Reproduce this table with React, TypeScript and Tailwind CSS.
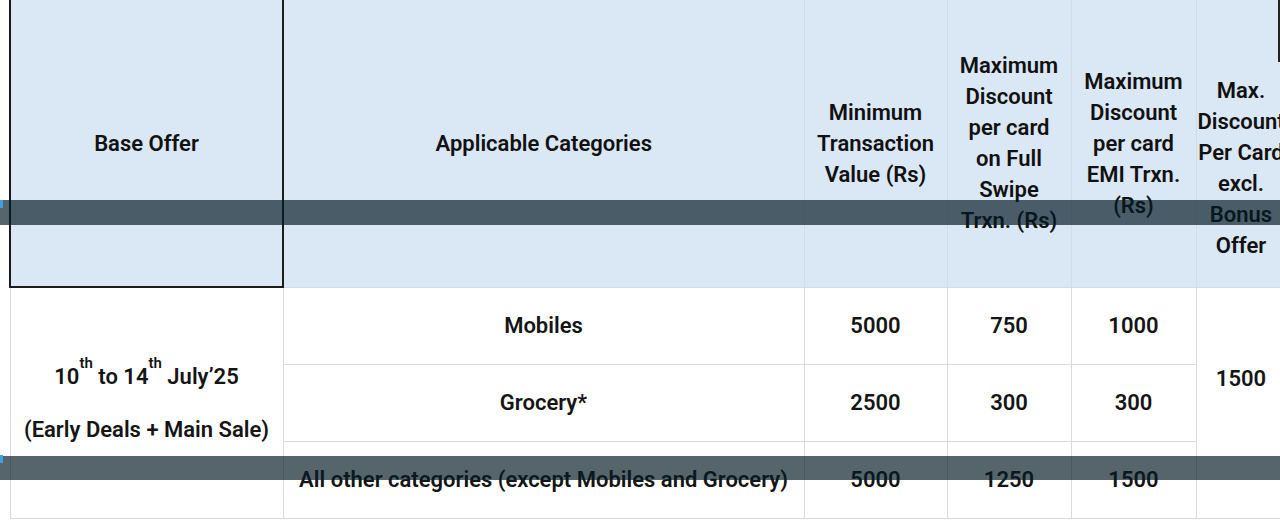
import React from "react";

const headCell =
  "bg-[#dae7f5] border border-[#d3dbe4] text-center align-middle text-[22px] leading-[31px] text-[#111]";
const bodyCell =
  "border border-[#dadada] text-center align-middle text-[22px] leading-[31px] text-[#151515] h-[77px]";

const rows = [
  { cat: "Mobiles", min: "5000", swipe: "750", emi: "1000" },
  { cat: "Grocery*", min: "2500", swipe: "300", emi: "300" },
  {
    cat: "All other categories (except Mobiles and Grocery)",
    min: "5000",
    swipe: "1250",
    emi: "1500",
  },
];

function Lines({ lines }: { lines: string[] }) {
  return (
    <>
      {lines.map((l, i) => (
        <div key={i} className="whitespace-nowrap">
          {l}
        </div>
      ))}
    </>
  );
}

export default function App() {
  return (
    <div
      className="relative w-[1280px] h-[531px] overflow-hidden bg-white"
      style={{ fontFamily: "Roboto, 'Noto Sans', sans-serif" }}
    >
      <table className="table-fixed border-collapse ml-[9px] mt-[-2px] w-[1276px] font-semibold">
        <colgroup>
          <col className="w-[273px]" />
          <col className="w-[521px]" />
          <col className="w-[143px]" />
          <col className="w-[124px]" />
          <col className="w-[125px]" />
          <col className="w-[90px]" />
        </colgroup>
        <thead>
          <tr>
            <th className="bg-[#dae7f5] border-2 border-[#1c1c1c] h-[288px] text-center align-middle text-[22px] leading-[31px] text-[#111] font-semibold">
              Base Offer
            </th>
            <th className={`${headCell} font-semibold`}>Applicable Categories</th>
            <th className={`${headCell} font-semibold`}>
              <Lines lines={["Minimum", "Transaction", "Value (Rs)"]} />
            </th>
            <th className={`${headCell} font-semibold`}>
              <Lines
                lines={["Maximum", "Discount", "per card", "on Full", "Swipe", "Trxn. (Rs)"]}
              />
            </th>
            <th className={`${headCell} font-semibold`}>
              <Lines lines={["Maximum", "Discount", "per card", "EMI Trxn.", "(Rs)"]} />
            </th>
            <th className={`${headCell} font-semibold pt-[50px] px-0`}>
              <Lines lines={["Max.", "Discount", "Per Card", "excl.", "Bonus", "Offer"]} />
            </th>
          </tr>
        </thead>
        <tbody>
          {rows.map((r, i) => (
            <tr key={r.cat}>
              {i === 0 && (
                <td rowSpan={3} className={`${bodyCell} text-[#222]`}>
                  <div className="flex flex-col items-center gap-[22px]">
                    <div className="whitespace-nowrap">
                      10<sup className="text-[15px] align-[8px]">th</sup> to 14
                      <sup className="text-[15px] align-[8px]">th</sup> July’25
                    </div>
                    <div className="whitespace-nowrap">(Early Deals + Main Sale)</div>
                  </div>
                </td>
              )}
              <td className={bodyCell}>{r.cat}</td>
              <td className={bodyCell}>{r.min}</td>
              <td className={bodyCell}>{r.swipe}</td>
              <td className={bodyCell}>{r.emi}</td>
              {i === 0 && (
                <td rowSpan={3} className={`${bodyCell} pb-[49px]`}>
                  1500
                </td>
              )}
            </tr>
          ))}
        </tbody>
      </table>

      {/* edge of the next column's border */}
      <div className="absolute left-[1278px] top-0 w-[2px] h-[62px] bg-[#222]" />

      {/* translucent overlay bands */}
      <div className="absolute left-0 right-0 top-[200px] h-[25px] bg-[rgba(6,27,37,0.68)]" />
      <div className="absolute left-0 top-[200px] w-[3px] h-[8px] bg-[#3ea0df]" />
      <div className="absolute left-0 right-0 top-[456px] h-[24px] bg-[rgba(6,27,37,0.68)]" />
      <div className="absolute left-0 top-[455px] w-[3px] h-[8px] bg-[#3ea0df]" />
    </div>
  );
}
